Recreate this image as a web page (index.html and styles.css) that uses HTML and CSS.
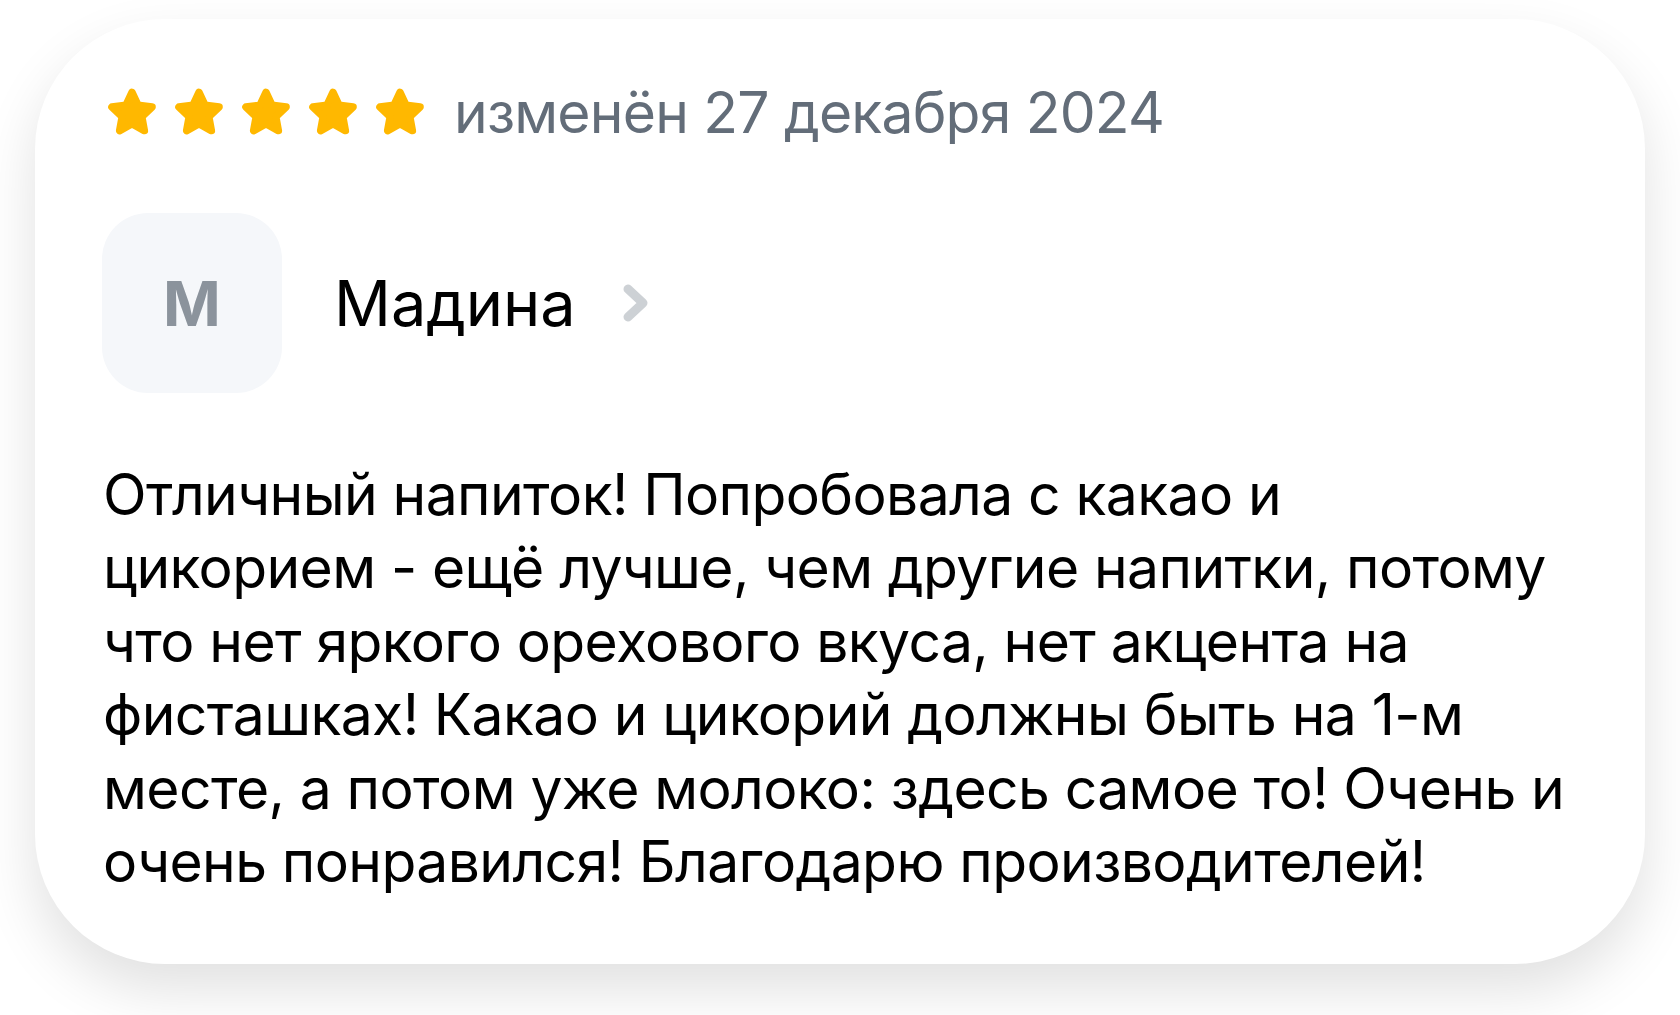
FILE: index.html
```html
<!DOCTYPE html>
<html lang="ru">
<head>
<meta charset="utf-8">
<link rel="stylesheet" href="styles.css">
</head>
<body>
<div class="card">
  <div class="head">
    <div class="stars">
      <svg class="star" viewBox="0 0 24 24"><path d="M12 3.2l2.6 5.5 6 .75-4.4 4.15 1.1 5.95L12 16.6l-5.3 2.95 1.1-5.95-4.4-4.15 6-.75z"/></svg>
      <svg class="star" viewBox="0 0 24 24"><path d="M12 3.2l2.6 5.5 6 .75-4.4 4.15 1.1 5.95L12 16.6l-5.3 2.95 1.1-5.95-4.4-4.15 6-.75z"/></svg>
      <svg class="star" viewBox="0 0 24 24"><path d="M12 3.2l2.6 5.5 6 .75-4.4 4.15 1.1 5.95L12 16.6l-5.3 2.95 1.1-5.95-4.4-4.15 6-.75z"/></svg>
      <svg class="star" viewBox="0 0 24 24"><path d="M12 3.2l2.6 5.5 6 .75-4.4 4.15 1.1 5.95L12 16.6l-5.3 2.95 1.1-5.95-4.4-4.15 6-.75z"/></svg>
      <svg class="star" viewBox="0 0 24 24"><path d="M12 3.2l2.6 5.5 6 .75-4.4 4.15 1.1 5.95L12 16.6l-5.3 2.95 1.1-5.95-4.4-4.15 6-.75z"/></svg>
    </div>
    <span class="date">изменён 27 декабря 2024</span>
  </div>
  <div class="author">
    <div class="avatar">М</div>
    <span class="name">Мадина</span>
    <svg class="chev" viewBox="0 0 34 46"><path d="M10 9l15 14-15 14"/></svg>
  </div>
  <p class="text">Отличный напиток! Попробовала с какао и<br>цикорием - ещё лучше, чем другие напитки, потому<br>что нет яркого орехового вкуса, нет акцента на<br>фисташках! Какао и цикорий должны быть на 1-м<br>месте, а потом уже молоко: здесь самое то! Очень и<br>очень понравился! Благодарю производителей!</p>
</div>
</body>
</html>
```

FILE: styles.css
```css
html, body {
  margin: 0;
  background: #ffffff;
}
body {
  box-sizing: border-box;
  min-height: 1015px;
  padding: 19px 35px 51px 35px;
  font-family: "Inter", "Noto Sans", sans-serif;
}
.card {
  box-sizing: border-box;
  width: 1610px;
  height: 945px;
  background: #ffffff;
  border-radius: 130px;
  box-shadow: 0 26px 56px rgba(0, 0, 0, 0.12);
  padding: 70px 0 0 69px;
}
.head {
  display: flex;
  align-items: center;
  height: 47px;
}
.stars {
  display: flex;
  gap: 11px;
}
.star {
  width: 56px;
  height: 56px;
  fill: #ffb800;
  stroke: #ffb800;
  stroke-width: 3.2;
  stroke-linejoin: round;
}
.date {
  margin-left: 26px;
  font-size: 57px;
  color: #636d79;
  letter-spacing: -0.8px;
  line-height: 1;
}
.author {
  display: flex;
  align-items: center;
  margin-top: 77px;
}
.avatar {
  width: 180px;
  height: 180px;
  border-radius: 46px;
  background: #f5f7fa;
  display: flex;
  align-items: center;
  justify-content: center;
  font-size: 62px;
  font-weight: 700;
  color: #8b939c;
  margin-left: -2px;
}
.name {
  margin-left: 52px;
  font-size: 63px;
  color: #000;
  line-height: 1;
}
.chev {
  margin-left: 42px;
  width: 34px;
  height: 46px;
  fill: none;
  stroke: #cdd1d5;
  stroke-width: 9;
  stroke-linecap: round;
  stroke-linejoin: round;
}
.text {
  margin: 65px 0 0 -1px;
  font-size: 57px;
  line-height: 73.4px;
  color: #000;
  white-space: nowrap;
  letter-spacing: -0.6px;
}
```
